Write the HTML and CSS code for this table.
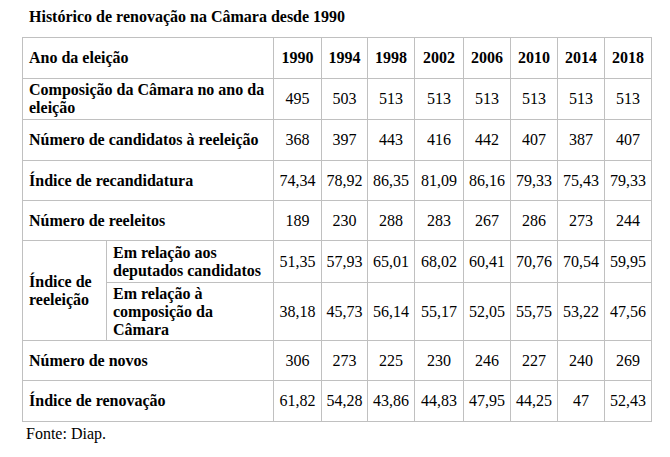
FILE: index.html
```html
<!DOCTYPE html>
<html lang="pt">
<head>
<meta charset="utf-8">
<link rel="stylesheet" href="styles.css">
</head>
<body>
<div class="page">
  <h1 class="title">Histórico de renovação na Câmara desde 1990</h1>
  <table class="data">
    <colgroup>
      <col class="c-a"><col class="c-b">
      <col class="c-1"><col class="c-2"><col class="c-3"><col class="c-4">
      <col class="c-5"><col class="c-6"><col class="c-7"><col class="c-8">
    </colgroup>
    <tbody>
      <tr class="r-h">
        <th class="lbl" colspan="2">Ano da eleição</th>
        <th>1990</th><th>1994</th><th>1998</th><th>2002</th><th>2006</th><th>2010</th><th>2014</th><th>2018</th>
      </tr>
      <tr class="r-41">
        <th class="lbl" colspan="2">Composição da Câmara no ano da eleição</th>
        <td>495</td><td>503</td><td>513</td><td>513</td><td>513</td><td>513</td><td>513</td><td>513</td>
      </tr>
      <tr class="r-41">
        <th class="lbl" colspan="2">Número de candidatos à reeleição</th>
        <td>368</td><td>397</td><td>443</td><td>416</td><td>442</td><td>407</td><td>387</td><td>407</td>
      </tr>
      <tr class="r-40">
        <th class="lbl" colspan="2">Índice de recandidatura</th>
        <td>74,34</td><td>78,92</td><td>86,35</td><td>81,09</td><td>86,16</td><td>79,33</td><td>75,43</td><td>79,33</td>
      </tr>
      <tr class="r-40">
        <th class="lbl" colspan="2">Número de reeleitos</th>
        <td>189</td><td>230</td><td>288</td><td>283</td><td>267</td><td>286</td><td>273</td><td>244</td>
      </tr>
      <tr class="r-42">
        <th class="lbl" rowspan="2">Índice de reeleição</th>
        <th class="lbl sub">Em relação aos deputados candidatos</th>
        <td>51,35</td><td>57,93</td><td>65,01</td><td>68,02</td><td>60,41</td><td>70,76</td><td>70,54</td><td>59,95</td>
      </tr>
      <tr class="r-58">
        <th class="lbl sub">Em relação à composição da Câmara</th>
        <td>38,18</td><td>45,73</td><td>56,14</td><td>55,17</td><td>52,05</td><td>55,75</td><td>53,22</td><td>47,56</td>
      </tr>
      <tr class="r-40">
        <th class="lbl" colspan="2">Número de novos</th>
        <td>306</td><td>273</td><td>225</td><td>230</td><td>246</td><td>227</td><td>240</td><td>269</td>
      </tr>
      <tr class="r-41">
        <th class="lbl" colspan="2">Índice de renovação</th>
        <td>61,82</td><td>54,28</td><td>43,86</td><td>44,83</td><td>47,95</td><td>44,25</td><td>47</td><td>52,43</td>
      </tr>
    </tbody>
  </table>
  <p class="source">Fonte: Diap.</p>
</div>
</body>
</html>
```

FILE: styles.css
```css
html, body {
  margin: 0;
  padding: 0;
  background: #ffffff;
}

body,
.title,
.data,
.data th,
.data td,
.source {
  font-family: "Liberation Serif", "Times New Roman", serif;
  color: #000000;
}

body {
  font-size: 16px;
}

.page {
  padding: 8px 0 0 14px;
}

.title {
  margin: 0 0 11px 15px;
  font-size: 16px;
  font-weight: bold;
  line-height: 18px;
}

.data {
  border-collapse: collapse;
  table-layout: fixed;
  width: 630px;
  margin-left: 8px;
  font-size: 16px;
}

.c-a { width: 84px; }
.c-b { width: 167px; }
.c-1 { width: 48px; }
.c-2 { width: 46px; }
.c-3 { width: 47px; }
.c-4 { width: 49px; }
.c-5 { width: 47px; }
.c-6 { width: 47px; }
.c-7 { width: 47px; }
.c-8 { width: 47px; }

.data th,
.data td {
  border: 1px solid #c0c0c0;
  padding: 1px 2px;
  text-align: center;
  vertical-align: middle;
  line-height: 18px;
  font-size: 16px;
  white-space: nowrap;
}

.data th {
  font-weight: bold;
}

.data td {
  font-weight: normal;
}

.data th.lbl {
  text-align: left;
  padding: 1px 2px 1px 6px;
  white-space: normal;
}

.r-h { height: 41px; }
.r-41 { height: 41px; }
.r-40 { height: 40px; }
.r-42 { height: 42px; }
.r-58 { height: 58px; }

.source {
  margin: 3px 0 0 12px;
  font-size: 16px;
  line-height: 18px;
}
```
